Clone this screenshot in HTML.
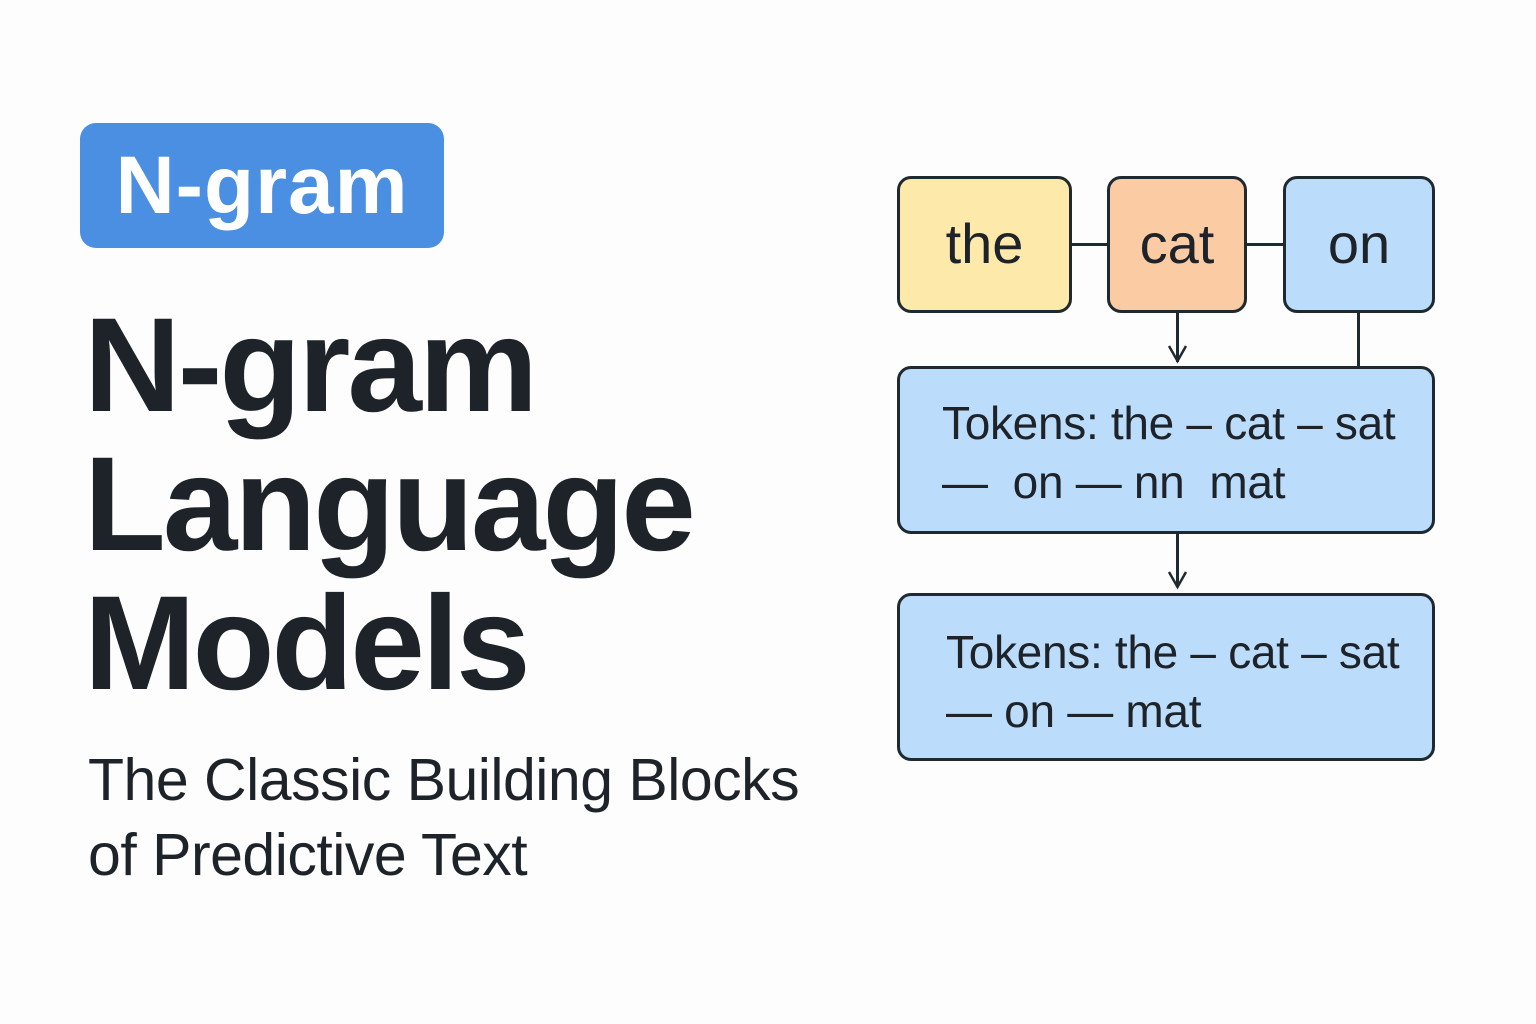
<!DOCTYPE html>
<html><head><meta charset="utf-8"><style>
body{margin:0;width:1536px;height:1024px;background:#fdfdfd;position:relative;overflow:hidden;font-family:"Liberation Sans",sans-serif;color:#1d2329}
.a{position:absolute}
.badge{left:80px;top:123px;width:364px;height:125px;background:#4a8fe2;border-radius:16px;color:#fff;font-weight:bold;font-size:82px;line-height:125px;text-align:center;letter-spacing:1px}
.title{left:84px;top:296px;font-size:134px;font-weight:bold;line-height:139px;letter-spacing:-3px}
.sub{left:88px;top:743px;font-size:59px;line-height:75px;letter-spacing:-0.5px}
.box{position:absolute;border:3px solid #1f2a30;border-radius:14px;box-sizing:border-box}
.w{font-size:56px;text-align:center;line-height:130px}
.t{font-size:46px;line-height:59px;padding:25px 0 0 42px;letter-spacing:-0.3px}
.ln{position:absolute;background:#1f2a30}
</style></head><body>
<div class="a badge">N-gram</div>
<div class="a title">N-gram<br>Language<br>Models</div>
<div class="a sub">The Classic Building Blocks<br>of Predictive Text</div>

<div class="ln" style="left:1070px;top:243px;width:40px;height:3px"></div>
<div class="ln" style="left:1245px;top:243px;width:40px;height:3px"></div>
<div class="ln" style="left:1176px;top:312px;width:3px;height:50px"></div>
<div class="ln" style="left:1357px;top:312px;width:3px;height:56px"></div>
<div class="ln" style="left:1176px;top:532px;width:3px;height:55px"></div>
<svg class="a" style="left:0;top:0" width="1536" height="1024"><g stroke="#1f2a30" stroke-width="2.5" fill="none"><path d="M1169 346 L1177.5 361 L1186 346"/><path d="M1169 572 L1177.5 587 L1186 572"/></g></svg>

<div class="box w" style="left:897px;top:176px;width:175px;height:137px;background:#fde9a9">the</div>
<div class="box w" style="left:1107px;top:176px;width:140px;height:137px;background:#fbcba4">cat</div>
<div class="box w" style="left:1283px;top:176px;width:152px;height:137px;background:#bcdcfb">on</div>
<div class="box t" style="left:897px;top:366px;width:538px;height:168px;background:#bcdcfb">Tokens: the – cat – sat<br>— &nbsp;on — nn &nbsp;mat</div>
<div class="box t" style="left:897px;top:593px;width:538px;height:168px;background:#bcdcfb;padding-left:46px;padding-top:27px">Tokens: the – cat – sat<br>— on — mat</div>
</body></html>
